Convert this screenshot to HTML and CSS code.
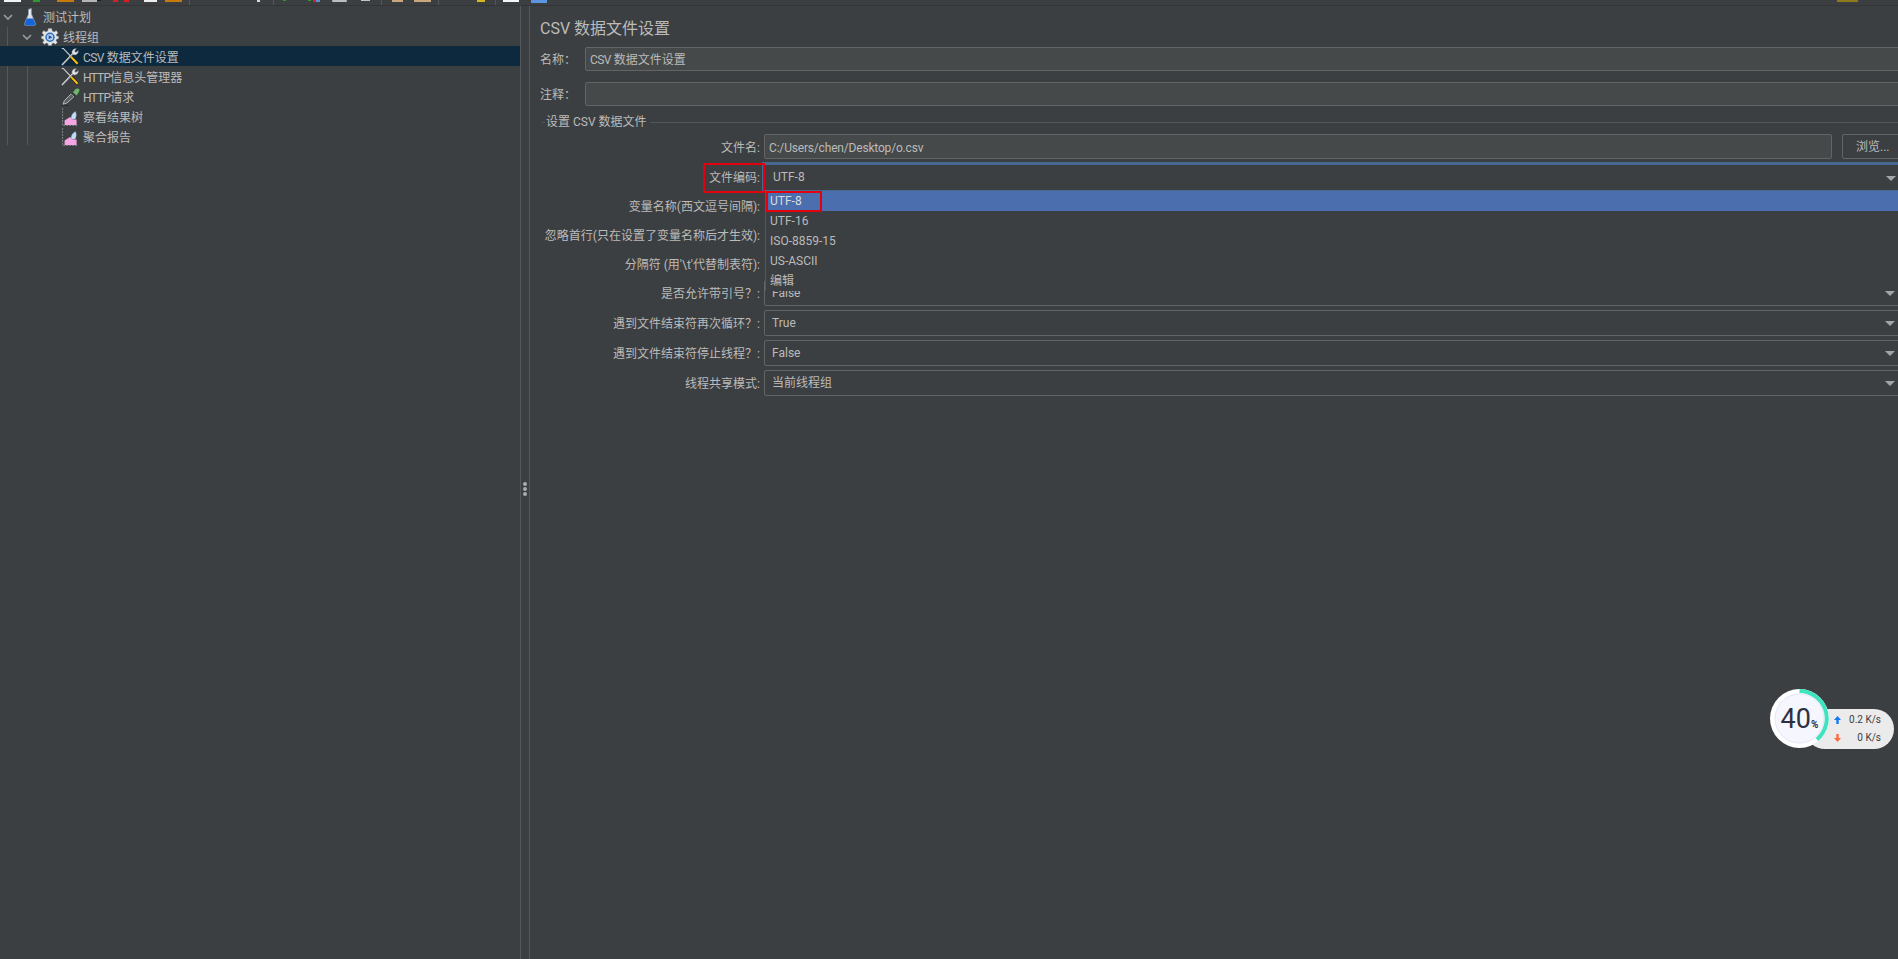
FILE: index.html
```html
<!DOCTYPE html>
<html lang="zh-CN">
<head>
<meta charset="utf-8">
<title>CSV 数据文件设置</title>
<link rel="stylesheet" href="styles.css">
</head>
<body>
<svg class="defs" width="0" height="0" aria-hidden="true">
  <symbol id="i-flask" viewBox="0 0 12 18">
    <path d="M4.5 1.2 L7.5 0.4 V6 L11.4 15.5 Q11.8 17.6 10 17.6 H2 Q0.2 17.6 0.6 15.5 L4.5 6 Z" fill="#d9dfe6" stroke="#8d97a3" stroke-width=".6"/>
    <path d="M2.9 10.5 H9.1 L11.2 15.6 Q11.5 17.4 10 17.4 H2 Q0.5 17.4 0.8 15.6 Z" fill="#1565d8"/>
    <path d="M5.4 2 V7" stroke="#fff" stroke-width=".8"/>
  </symbol>
  <symbol id="i-gear" viewBox="0 0 18 18">
    <path d="M7.3 0.6 H10.7 L11.2 3 L13.2 3.9 L15.3 2.6 L15.4 2.7 L17 5 L15.2 6.7 L15.6 8 L17.6 8.4 V10.6 L15.5 11.2 L15 12.6 L16.3 14.6 L14.5 16.3 L12.5 15 L11 15.6 L10.6 17.6 H7.4 L7 15.6 L5.4 15 L3.5 16.3 L1.7 14.6 L3 12.6 L2.5 11.2 L0.4 10.6 V8.4 L2.4 8 L2.8 6.7 L1 5 L2.7 2.6 L4.8 3.9 L6.8 3 Z" fill="#e3e5e8" stroke="#8e949b" stroke-width=".5"/>
    <circle cx="9" cy="9.2" r="4.7" fill="#2f6db5"/>
    <circle cx="9" cy="9.2" r="3.2" fill="#b8d3ee"/>
    <path d="M7.7 7.2 L11.3 9.2 L7.7 11.2 Z" fill="#1d4f93"/>
  </symbol>
  <symbol id="i-tools" viewBox="0 0 18 18">
    <path d="M1 17 L12.5 5" stroke="#e4e6e9" stroke-width="1.5"/>
    <path d="M1.4 17.2 L12.8 5.4" stroke="#55595e" stroke-width=".5"/>
    <path d="M11 5.5 Q10.4 2.4 13 0.9 L15.4 0.5 L13.6 3 L14.8 4.4 L17.4 2.4 Q17.6 5.4 15.4 6.6 Q13.6 7.3 12.4 6.6 Z" fill="#dfe2e6" stroke="#80858b" stroke-width=".4"/>
    <path d="M0.8 0.6 L2 0.2 L10 8.6" stroke="#cfd2d5" stroke-width="1.1" fill="none"/>
    <path d="M9.8 8.6 L16.6 15.8" stroke="#1d1d1d" stroke-width="3.2"/>
    <path d="M9.8 8.6 L16.6 15.8" stroke="#f5c211" stroke-width="2"/>
  </symbol>
  <symbol id="i-dropper" viewBox="0 0 19 18">
    <path d="M2 16.2 L3.4 12.6 L10.2 5.8 L13 8.6 L6 15 Z" fill="#5d6267" stroke="#c9cdd0" stroke-width=".8"/>
    <path d="M10 5.2 L13.6 8.8 L15 7.4 L11.4 3.8 Z" fill="#33373a"/>
    <path d="M11.8 4.2 L15 0.8 Q17.4 -0.2 18.4 1.4 Q19 3.4 15.6 7.6 Z" fill="#6cb56a"/>
    <path d="M0 17.6 H8" stroke="#2a2d2f" stroke-width="1.2"/>
  </symbol>
  <symbol id="i-graph" viewBox="0 0 16 18">
    <path d="M0.6 0 V17.4 H15.5" stroke="#7d8185" stroke-width="1" fill="none" stroke-dasharray="2 1"/>
    <path d="M2.6 17 V12.6 L8 9 L11 11.6 L14.6 11.4 V17 Z" fill="#f3a6e3"/>
    <path d="M9 10.6 Q9.2 5.6 13.4 3.6 Q15.2 6.6 13.4 10.8 Q11 12 9 10.6 Z" fill="#c6dcf7" stroke="#7fa1cf" stroke-width=".4"/>
  </symbol>
</svg>

<div class="app">
  <div class="toolbar">
    <svg class="toolbar-strip" width="1898" height="5" viewBox="0 0 1898 5">
      <rect x="4" y="0" width="17" height="2" fill="#f2f2f2"/>
      <rect x="33" y="0" width="7" height="2" fill="#2d9a2d"/>
      <rect x="57" y="0" width="17" height="2" fill="#c77a0c"/>
      <rect x="82" y="0" width="15" height="2" fill="#b5b5b5"/>
      <rect x="97" y="0" width="4" height="1" fill="#222"/>
      <rect x="113" y="0" width="5" height="2" fill="#d42020"/>
      <rect x="124" y="0" width="5" height="2" fill="#d42020"/>
      <rect x="144" y="0" width="13" height="2" fill="#eeeeee"/>
      <rect x="165" y="0" width="17" height="2" fill="#c77a0c"/>
      <rect x="189" y="0" width="1" height="5" fill="#55585a"/>
      <rect x="257" y="0" width="3" height="2" fill="#d8d8d8"/>
      <rect x="273" y="0" width="1" height="5" fill="#55585a"/>
      <rect x="283" y="0" width="3" height="1" fill="#2d9a2d"/>
      <rect x="308" y="0" width="3" height="1" fill="#2d9a2d"/>
      <rect x="313" y="0" width="3" height="2" fill="#d42020"/>
      <rect x="316" y="0" width="4" height="2" fill="#5b8fd6"/>
      <rect x="332" y="0" width="15" height="2" rx="1" fill="#bdbdbd"/>
      <rect x="361" y="0" width="9" height="1" fill="#c4c4c4"/>
      <rect x="381" y="0" width="1" height="5" fill="#55585a"/>
      <rect x="392" y="0" width="11" height="2" fill="#c9a77c"/>
      <rect x="414" y="0" width="17" height="2" fill="#c9a77c"/>
      <rect x="438" y="0" width="1" height="5" fill="#55585a"/>
      <rect x="477" y="0" width="8" height="2" fill="#d8b820"/>
      <rect x="495" y="0" width="1" height="5" fill="#55585a"/>
      <rect x="503" y="0" width="16" height="2" fill="#f5f5f5"/>
      <rect x="531" y="0" width="16" height="3" fill="#5b95e0"/>
      <rect x="1837" y="0" width="21" height="2" fill="#8d7a1c"/>
    </svg>
  </div>

  <div class="split">
    <aside class="tree">
      <span class="guide guide-a"></span>
      <span class="guide guide-b"></span>
      <div class="row lvl-0">
        <svg class="chev" width="10" height="6" viewBox="0 0 10 6"><path d="M1 1 L5 5 L9 1" fill="none" stroke="#9a9da0" stroke-width="1.6"/></svg>
        <svg class="ico ico-flask" width="12" height="18"><use href="#i-flask"/></svg>
        <span class="label">测试计划</span>
      </div>
      <div class="row lvl-1">
        <svg class="chev" width="10" height="6" viewBox="0 0 10 6"><path d="M1 1 L5 5 L9 1" fill="none" stroke="#9a9da0" stroke-width="1.6"/></svg>
        <svg class="ico ico-gear" width="18" height="18"><use href="#i-gear"/></svg>
        <span class="label">线程组</span>
      </div>
      <div class="row lvl-2 selected">
        <svg class="ico" width="18" height="18"><use href="#i-tools"/></svg>
        <span class="label"><span class="tight">CSV</span> 数据文件设置</span>
      </div>
      <div class="row lvl-2">
        <svg class="ico" width="18" height="18"><use href="#i-tools"/></svg>
        <span class="label"><span class="tighter">HTTP</span>信息头管理器</span>
      </div>
      <div class="row lvl-2">
        <svg class="ico ico-dropper" width="19" height="18"><use href="#i-dropper"/></svg>
        <span class="label"><span class="tighter">HTTP</span>请求</span>
      </div>
      <div class="row lvl-2">
        <svg class="ico ico-graph" width="16" height="18"><use href="#i-graph"/></svg>
        <span class="label">察看结果树</span>
      </div>
      <div class="row lvl-2">
        <svg class="ico ico-graph" width="16" height="18"><use href="#i-graph"/></svg>
        <span class="label">聚合报告</span>
      </div>
    </aside>

    <div class="divider"><i></i><i></i><i></i></div>

    <section class="detail">
      <h1 class="title">CSV 数据文件设置</h1>
      <div class="meta-row">
        <label>名称：</label>
        <div class="field"><span><span class="tight">CSV</span> 数据文件设置</span></div>
      </div>
      <div class="meta-row">
        <label>注释：</label>
        <div class="field"></div>
      </div>
      <div class="group-head"><span class="group-title">设置 CSV 数据文件</span></div>

      <div class="form">
        <div class="form-row h-file">
          <label>文件名:</label>
          <div class="file-cell">
            <div class="field field-file">C:/Users/chen/Desktop/o.csv</div>
            <button class="browse">浏览...</button>
          </div>
        </div>
        <div class="form-row h-enc">
          <label>文件编码:</label>
          <div class="combo combo-focus"><span>UTF-8</span><b class="arrow"></b></div>
        </div>
        <div class="form-row h-30 hidden-row"><label>变量名称(西文逗号间隔):</label></div>
        <div class="form-row h-29 hidden-row"><label>忽略首行(只在设置了变量名称后才生效):</label></div>
        <div class="form-row h-29 hidden-row"><label>分隔符 (用'\t'代替制表符):</label></div>
        <div class="form-row h-combo">
          <label>是否允许带引号？:</label>
          <div class="combo"><span>False</span><b class="arrow"></b></div>
        </div>
        <div class="form-row h-combo">
          <label>遇到文件结束符再次循环？:</label>
          <div class="combo"><span>True</span><b class="arrow"></b></div>
        </div>
        <div class="form-row h-combo">
          <label>遇到文件结束符停止线程？:</label>
          <div class="combo"><span>False</span><b class="arrow"></b></div>
        </div>
        <div class="form-row h-combo">
          <label>线程共享模式:</label>
          <div class="combo"><span>当前线程组</span><b class="arrow"></b></div>
        </div>

        <ul class="popup">
          <li class="active">UTF-8</li>
          <li>UTF-16</li>
          <li>ISO-8859-15</li>
          <li>US-ASCII</li>
          <li>编辑</li>
        </ul>
        <span class="mark mark-label"></span>
        <span class="mark mark-item"></span>
      </div>
    </section>
  </div>

  <div class="speed">
    <div class="pill">
      <div class="pill-line"><svg width="7" height="8" viewBox="0 0 7 8"><path d="M3.5 0 L7 4 H4.7 V8 H2.3 V4 H0 Z" fill="#1677ff"/></svg><span>0.2 K/s</span></div>
      <div class="pill-line"><svg width="7" height="8" viewBox="0 0 7 8"><path d="M3.5 8 L7 4 H4.7 V0 H2.3 V4 H0 Z" fill="#ff6a3d"/></svg><span>0 K/s</span></div>
    </div>
    <div class="dial">
      <svg class="dial-ring" width="59" height="59" viewBox="0 0 59 59">
        <circle cx="29.5" cy="29.5" r="29.5" fill="#ffffff"/>
        <circle cx="29.5" cy="29.5" r="24.5" fill="#f6f6ff" stroke="#e6e6f5" stroke-width="1"/>
        <path d="M29.5 2 A27.5 27.5 0 0 1 47 50.5" fill="none" stroke="#3fe3c0" stroke-width="4"/>
      </svg>
      <div class="dial-text"><strong>40</strong><small>%</small></div>
    </div>
  </div>
</div>
</body>
</html>
```

FILE: styles.css
```css
* { box-sizing: border-box; }
html, body { margin: 0; height: 100%; overflow: hidden; }
body {
  background: #3c3f41;
  color: #bbbbbb;
  font: 12px/16px "Roboto", "Noto Sans CJK SC", sans-serif;
}
.defs { position: absolute; }
.app { position: relative; width: 1898px; height: 959px; display: flex; flex-direction: column; overflow: hidden; }

.toolbar { height: 6px; border-bottom: 1px solid #323436; flex: none; }
.toolbar-strip { display: block; }

.split { flex: 1; display: flex; min-height: 0; }

.tree { position: relative; width: 520px; flex: none; }
.guide { position: absolute; width: 1px; background: #55585a; }
.guide-a { left: 7px; top: 21px; height: 118px; }
.guide-b { left: 27px; top: 40px; height: 99px; }
.row { position: relative; height: 20px; padding-top: 2px; display: flex; align-items: center; white-space: nowrap; }
.row.selected { background: #0d293e; }
.row .label { padding-top: 2px; }
.tight { letter-spacing: -.6px; }
.tighter { letter-spacing: -.8px; }
.lvl-0 { padding-left: 3px; }
.lvl-1 { padding-left: 22px; }
.lvl-2 { padding-left: 61px; }
.chev { flex: none; }
.ico { flex: none; margin-right: 4px; }
.ico-flask { margin-left: 11px; margin-right: 7px; }
.ico-gear { margin-left: 9px; margin-right: 4px; }
.ico-dropper { margin-right: 3px; }
.ico-graph { margin-left: 1px; margin-right: 5px; }

.divider { width: 10px; flex: none; border-left: 1px solid #55585a; border-right: 1px solid #55585a; display: flex; flex-direction: column; align-items: center; justify-content: center; gap: 1px; padding-top: 13px; }
.divider i { width: 4px; height: 4px; border-radius: 50%; background: #a9abad; }

.detail { width: 1375px; flex: none; }
.title { margin: 0; padding: 12px 0 0 10px; height: 41px; font-size: 16px; line-height: 22px; font-weight: 400; }
.meta-row { display: grid; grid-template-columns: 45px 1fr; padding-left: 10px; align-items: center; height: 24px; margin-bottom: 11px; }
.meta-row label { padding-top: 2px; }
.field { background: #45494a; border: 1px solid #646464; border-radius: 2px; height: 100%; padding: 2px 4px 0; display: flex; align-items: center; white-space: nowrap; }

.group-head { margin: -3px 0 4px 12px; height: 16px; display: flex; align-items: center; gap: 1px; }
.group-head::before { content: ""; width: 3px; height: 1px; background: #55585a; }
.group-head::after { content: ""; flex: 1; height: 1px; margin-left: 2px; background: #55585a; }

.form { position: relative; }
.form-row { display: grid; grid-template-columns: 230px 1fr; column-gap: 4px; align-items: center; }
.form-row label { text-align: right; white-space: nowrap; padding-top: 2px; }
.form-row.hidden-row label { padding-top: 0; padding-bottom: 1px; }
.h-file { height: 25px; margin-bottom: 3px; }
.h-enc { height: 30px; }
.h-30 { height: 30px; }
.h-29 { height: 29px; }
.h-combo { height: 26px; margin-bottom: 4px; }
.file-cell { display: flex; gap: 10px; height: 25px; }
.field-file { flex: 1; letter-spacing: -.18px; }
.browse { width: 63px; height: 25px; flex: none; background: #3c3f41; color: #bbbbbb; border: 1px solid #646464; border-radius: 2px; font: inherit; text-align: left; padding: 0 0 0 13px; }

.combo { position: relative; height: 26px; border: 1px solid #646464; border-radius: 2px; padding-left: 7px; display: flex; align-items: center; }
.combo-focus { height: 30px; border: 0; border-top: 3px solid #46698f; border-bottom: 2px solid #46698f; border-left: 2px solid #46698f; border-radius: 0; margin-left: -2px; padding: 0 0 2px 9px; }
.arrow { position: absolute; right: 9px; top: 50%; margin-top: -2px; border-left: 5px solid transparent; border-right: 5px solid transparent; border-top: 5px solid #a5a5a5; }

.popup { position: absolute; left: 235px; right: 0; top: 57px; height: 100px; margin: 0; padding: 0; list-style: none; background: #3c3f41; border-left: 1px solid #55585a; }
.popup li { height: 20px; line-height: 20px; padding-left: 4px; }
.popup li.active { background: #4b6eaf; color: #dcdcdc; }

.mark { position: absolute; border: 2px solid #e3000f; }
.mark-label { left: 173px; top: 29px; width: 62px; height: 30px; }
.mark-item { left: 236px; top: 57px; width: 56px; height: 21px; }

.speed { position: absolute; left: 1770px; top: 689px; width: 125px; height: 60px; }
.pill { position: absolute; right: 1px; top: 20px; width: 89px; height: 40px; padding: 3px 13px 0 29px; background: #ebebeb; border-radius: 20px; color: #3a3d45; font-size: 10px; line-height: 16px; }
.pill-line { display: flex; justify-content: space-between; align-items: center; height: 16px; margin-bottom: 2px; }
.dial { position: absolute; left: 0; top: 0; width: 59px; height: 59px; }
.dial-ring { position: absolute; left: 0; top: 0; }
.dial-text { position: absolute; inset: 0; display: flex; align-items: baseline; justify-content: center; padding-top: 14px; color: #2e3040; }
.dial-text strong { font: 400 27px/32px "Roboto", sans-serif; }
.dial-text small { font: 700 10px/10px "Roboto", sans-serif; }
```
